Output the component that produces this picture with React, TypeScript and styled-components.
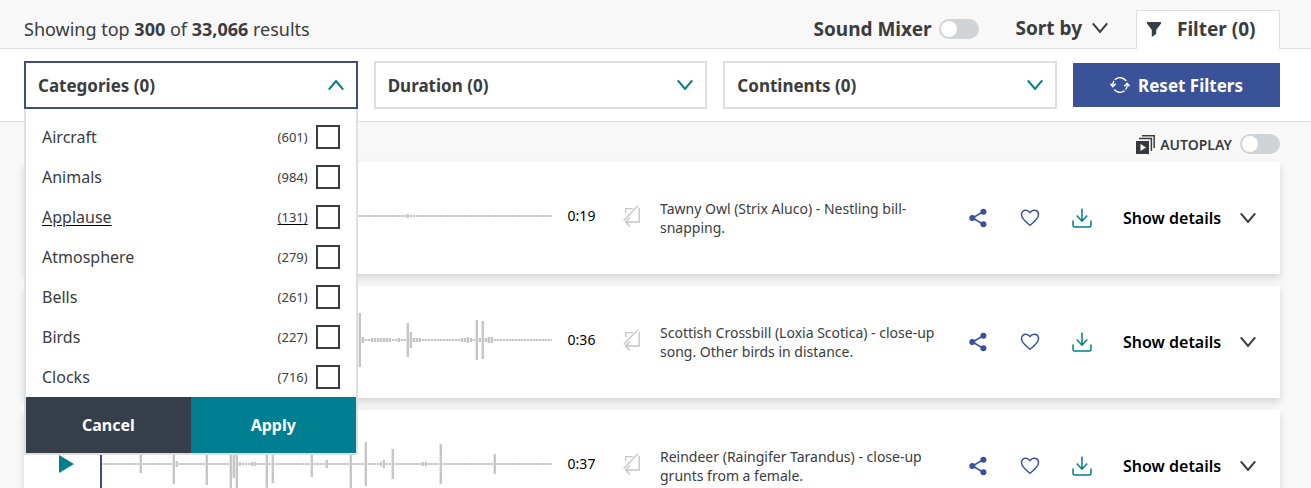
import React, { useState } from "react";
import styled, { createGlobalStyle, css } from "styled-components";

const ink = "#3a3c3e";
const line = "#dedfe0";
const teal = "#007f88";
const navy = "#3a5398";

const GlobalStyle = createGlobalStyle`
  * { box-sizing: border-box; }
  body {
    margin: 0;
    background: #f8f8f8;
    color: ${ink};
    font-family: "Noto Sans", "Open Sans", sans-serif;
  }
  button {
    margin: 0;
    padding: 0;
    border: 0;
    background: none;
    color: inherit;
    font: inherit;
    cursor: pointer;
  }
  svg { display: block; flex: none; }
`;

const Page = styled.div`
  height: 100vh;
  overflow: hidden;
`;

const TopBar = styled.header`
  display: flex;
  align-items: flex-end;
  height: 49px;
  padding: 0 31px 0 24px;
  border-bottom: 1px solid ${line};
`;

const BarItem = styled.div`
  display: flex;
  align-items: center;
  height: 38px;
`;

const ResultCount = styled(BarItem)`
  flex: 1;
  font-size: 18px;
  line-height: 24px;
`;

const MixerLabel = styled.label`
  display: flex;
  align-items: center;
  gap: 8px;
  height: 38px;
  margin-right: 36px;
  font-size: 19px;
  font-weight: 700;
`;

const SortButton = styled.button`
  display: flex;
  align-items: center;
  gap: 10px;
  height: 40px;
  margin-right: 28px;
  font-size: 19px;
  font-weight: 700;
`;

const FilterTab = styled.button`
  display: flex;
  align-items: center;
  gap: 16px;
  width: 144px;
  height: 39px;
  margin-bottom: -1px;
  padding: 0 0 2px 10px;
  border: 1px solid ${line};
  border-bottom: 0;
  background: #fff;
  font-size: 19px;
  font-weight: 700;
`;

const Toggle = styled.input`
  appearance: none;
  flex: none;
  display: flex;
  align-items: center;
  width: 40px;
  height: 20px;
  margin: 0;
  padding: 0 2px;
  border-radius: 10px;
  background: #d1d4d7;
  cursor: pointer;

  &::before {
    content: "";
    width: 16px;
    height: 16px;
    border-radius: 50%;
    background: #fff;
  }

  &:checked {
    justify-content: flex-end;
    background: ${teal};
  }
`;

const FilterBar = styled.section`
  display: flex;
  align-items: center;
  gap: 16px;
  height: 73px;
  padding: 0 31px 0 24px;
  border-bottom: 1px solid ${line};
  background: #fff;
`;

const Dropdown = styled.div`
  position: relative;
  flex: 1;
`;

const DropdownButton = styled.button<{ $open?: boolean }>`
  display: flex;
  align-items: center;
  justify-content: space-between;
  width: 100%;
  height: 48px;
  padding: 0 12px;
  border: 2px solid ${(p) => (p.$open ? "#404f78" : line)};
  background: #fff;
  color: ${ink};
  font-size: 17px;
  font-weight: 700;
`;

const ResetButton = styled.button`
  display: flex;
  align-items: center;
  justify-content: center;
  gap: 8px;
  width: 207px;
  height: 44px;
  background: ${navy};
  color: #fff;
  font-size: 17px;
  font-weight: 700;
`;

const Panel = styled.div`
  position: absolute;
  z-index: 2;
  top: 100%;
  left: 0;
  right: 0;
  border: 2px solid ${line};
  border-top: 0;
  background: #fff;
`;

const OptionList = styled.ul`
  margin: 0;
  padding: 8px 16px 0;
  list-style: none;
`;

const Option = styled.label<{ $hovered?: boolean }>`
  display: flex;
  align-items: center;
  gap: 8px;
  height: 40px;
  font-size: 16px;
  ${(p) =>
    p.$hovered &&
    css`
      text-decoration: underline #000;
      text-underline-offset: 2px;
    `}
`;

const OptionName = styled.span`
  flex: 1;
`;

const OptionCount = styled.span`
  font-size: 13px;
`;

const Tick = styled.input`
  appearance: none;
  width: 24px;
  height: 24px;
  margin: 0;
  border: 2px solid ${ink};
  background: #fff;

  &:checked {
    background: ${teal};
  }
`;

const PanelActions = styled.div`
  display: flex;
`;

const PanelButton = styled.button<{ $primary?: boolean }>`
  flex: 1;
  height: 56px;
  background: ${(p) => (p.$primary ? "#007f92" : "#353e49")};
  color: #fff;
  font-size: 16px;
  font-weight: 700;
`;

const Results = styled.main`
  padding: 0 31px 0 24px;
`;

const AutoplayRow = styled.div`
  display: flex;
  align-items: center;
  justify-content: flex-end;
  height: 40px;
  padding-top: 4px;
`;

const AutoplayLabel = styled.label`
  display: flex;
  align-items: center;
  gap: 8px;
  font-size: 14px;
  font-weight: 600;
`;

const AutoplayText = styled.span`
  display: flex;
  align-items: center;
  gap: 5px;
`;

const CardList = styled.div`
  display: grid;
  gap: 12px;
`;

const Card = styled.article`
  display: grid;
  grid-template-columns:
    76px minmax(0, 452fr) 59px 41px minmax(0, 300fr)
    52px 52px 52px 172px;
  align-items: center;
  height: 112px;
  padding-bottom: 4px;
  background: #fff;
  box-shadow: 0 4px 8px rgba(0, 0, 0, 0.14);
`;

const IconButton = styled.button`
  display: grid;
  place-items: center;
  height: 44px;
`;

const ActionButton = styled(IconButton)`
  padding-top: 4px;
`;

const PlayButton = styled(IconButton)`
  padding-left: 10px;
`;

const WaveSvg = styled.svg`
  width: 100%;
  height: 56px;
`;

const Time = styled.span`
  padding-bottom: 2px;
  text-align: center;
  color: #000;
  font-size: 14px;
`;

const Description = styled.p`
  margin: 0;
  padding: 4px 8px 0;
  font-size: 14px;
  line-height: 19px;
`;

const DetailsButton = styled.button`
  display: flex;
  align-items: center;
  justify-content: space-between;
  height: 44px;
  padding: 4px 24px 0 15px;
  color: #000;
  font-size: 16px;
  font-weight: 600;
`;

function Chevron({ up = false, color = ink }: { up?: boolean; color?: string }) {
  return (
    <svg width="16" height="12" viewBox="0 0 16 12" fill="none" stroke={color} strokeWidth="2" aria-hidden="true">
      <path d={up ? "M.8 10.6 8 2 15.2 10.6" : "M.8 1.4 8 10 15.2 1.4"} />
    </svg>
  );
}

function FunnelIcon() {
  return (
    <svg width="14" height="15" viewBox="0 0 14 15" fill="#353e49" aria-hidden="true">
      <path d="M0 0H14V1.6L9.2 8V12L4.8 15V8L0 1.6Z" />
    </svg>
  );
}

function ResetIcon() {
  return (
    <svg width="20" height="18" viewBox="0 0 20 18" fill="none" stroke="#fff" strokeWidth="1.4" aria-hidden="true">
      <path d="M4.8 3.8A7.3 7.3 0 0 1 16.2 5.2M17.2 8.2A7.3 7.3 0 0 1 15.6 13.6M14.6 14.8A7.3 7.3 0 0 1 4.2 13.4M2.8 9.8A7.3 7.3 0 0 1 4 4.9" />
      <path d="M14.2 10.2 17.2 7.2 19.6 10.4M.4 7.6 2.8 10.6 5.8 7.8" />
    </svg>
  );
}

function AutoplayIcon() {
  return (
    <svg width="19" height="19" viewBox="0 0 19 19" fill="none" aria-hidden="true">
      <path d="M6 .8H18.2V13M3 3.6H15.4V16" stroke={ink} strokeWidth="1.5" />
      <path d="M0 6H13V19H0Z" fill="#353a40" />
      <path d="M4.5 9 10 12.5 4.5 16Z" fill="#fff" />
    </svg>
  );
}

function LoopOffIcon() {
  return (
    <svg width="18" height="22" viewBox="0 0 18 22" fill="none" stroke="#c6c6c6" strokeWidth="1.4" aria-hidden="true">
      <path d="M2.6 8V3.6H10M16.2 3V17H3M7 12.6 2.6 17 7 21.4M.6 15.6 15 .8" />
    </svg>
  );
}

function ShareIcon() {
  return (
    <svg width="18" height="20" viewBox="0 0 18 20" fill={navy} stroke={navy} strokeWidth="1.5" aria-hidden="true">
      <path d="M14.5 3.5 3.5 10 14.5 16.5" fill="none" />
      <circle cx="14.4" cy="3.7" r="2.3" />
      <circle cx="3.3" cy="10" r="2.3" />
      <circle cx="14.4" cy="16.3" r="2.3" />
    </svg>
  );
}

function HeartIcon() {
  return (
    <svg width="20" height="18" viewBox="0 0 20 18" fill="none" stroke={navy} strokeWidth="1.5" aria-hidden="true">
      <path d="M10 3.6C8.8 1.8 7.4 1.2 5.8 1.2 3.2 1.2 1.5 3.1 1.5 5.6 1.5 10 6 13.2 10 16.3 14 13.2 18.5 10 18.5 5.6 18.5 3.1 16.8 1.2 14.2 1.2 12.6 1.2 11.2 1.8 10 3.6Z" />
    </svg>
  );
}

function DownloadIcon() {
  return (
    <svg width="20" height="20" viewBox="0 0 20 20" fill="none" stroke={teal} strokeWidth="1.5" aria-hidden="true">
      <path d="M10 .5V13M4.8 7.6 10 13.2 15.2 7.6M1 12.5V17.4Q1 18.9 2.5 18.9H17.5Q19 18.9 19 17.4V12.5" />
    </svg>
  );
}

const BAR_COUNT = 151;

/* Peaks map a bar index to its half height; every other bar is silence. */
function Waveform({ peaks }: { peaks: Record<number, number> }) {
  return (
    <WaveSvg viewBox="0 0 452 56" preserveAspectRatio="none" role="img" aria-label="Waveform">
      <g fill="#c6c6c6">
        {Array.from({ length: BAR_COUNT }, (_, i) => {
          const half = peaks[i] ?? 1;
          return <rect key={i} x={0.6 + i * 3} y={28 - half} width="2.4" height={half * 2} />;
        })}
      </g>
      <rect x="0" y="0" width="2" height="56" fill="#3f4a86" />
    </WaveSvg>
  );
}

const categories = [
  { name: "Aircraft", count: 601 },
  { name: "Animals", count: 984 },
  { name: "Applause", count: 131, hovered: true },
  { name: "Atmosphere", count: 279 },
  { name: "Bells", count: 261 },
  { name: "Birds", count: 227 },
  { name: "Clocks", count: 716 },
];

const sounds: { title: string; time: string; peaks: Record<number, number> }[] = [
  {
    title: "Tawny Owl (Strix Aluco) - Nestling bill-snapping.",
    time: "0:19",
    peaks: { 102: 2 },
  },
  {
    title: "Scottish Crossbill (Loxia Scotica) - close-up song. Other birds in distance.",
    time: "0:36",
    peaks: {
      86: 27, 87: 3, 90: 2, 91: 2, 92: 2, 93: 2, 94: 2, 95: 2, 96: 2, 99: 2,
      102: 17, 103: 8, 104: 2, 105: 2, 106: 2, 120: 2, 121: 2, 122: 3, 123: 2,
      125: 20, 126: 2, 127: 19, 128: 2, 129: 3, 130: 3,
    },
  },
  {
    title: "Reindeer (Raingifer Tarandus) - close-up grunts from a female.",
    time: "0:37",
    peaks: {
      13: 9, 24: 20, 25: 3, 35: 21, 43: 26, 44: 14, 45: 26, 46: 2, 50: 2, 51: 2,
      55: 26, 57: 19, 70: 13, 75: 4, 83: 26, 88: 22, 93: 2, 94: 4, 97: 15,
      107: 2, 108: 2, 113: 20, 131: 10,
    },
  },
];

export default function App() {
  const [open, setOpen] = useState(true);

  return (
    <Page>
      <GlobalStyle />
      <TopBar>
        <ResultCount>
          <span>
            Showing top <strong>300</strong> of <strong>33,066</strong> results
          </span>
        </ResultCount>
        <MixerLabel>
          Sound Mixer
          <Toggle type="checkbox" role="switch" />
        </MixerLabel>
        <SortButton type="button">
          Sort by
          <Chevron />
        </SortButton>
        <FilterTab type="button" aria-expanded="true">
          <FunnelIcon />
          Filter (0)
        </FilterTab>
      </TopBar>

      <FilterBar>
        <Dropdown>
          <DropdownButton type="button" $open={open} aria-expanded={open} onClick={() => setOpen(!open)}>
            Categories (0)
            <Chevron up={open} color={teal} />
          </DropdownButton>
          {open && (
            <Panel>
              <OptionList>
                {categories.map((c) => (
                  <li key={c.name}>
                    <Option $hovered={c.hovered}>
                      <OptionName>{c.name}</OptionName>
                      <OptionCount>({c.count})</OptionCount>
                      <Tick type="checkbox" />
                    </Option>
                  </li>
                ))}
              </OptionList>
              <PanelActions>
                <PanelButton type="button" onClick={() => setOpen(false)}>Cancel</PanelButton>
                <PanelButton type="button" $primary onClick={() => setOpen(false)}>Apply</PanelButton>
              </PanelActions>
            </Panel>
          )}
        </Dropdown>
        <Dropdown>
          <DropdownButton type="button" aria-expanded="false">
            Duration (0)
            <Chevron color={teal} />
          </DropdownButton>
        </Dropdown>
        <Dropdown>
          <DropdownButton type="button" aria-expanded="false">
            Continents (0)
            <Chevron color={teal} />
          </DropdownButton>
        </Dropdown>
        <ResetButton type="button">
          <ResetIcon />
          Reset Filters
        </ResetButton>
      </FilterBar>

      <Results>
        <AutoplayRow>
          <AutoplayLabel>
            <AutoplayText>
              <AutoplayIcon />
              AUTOPLAY
            </AutoplayText>
            <Toggle type="checkbox" role="switch" />
          </AutoplayLabel>
        </AutoplayRow>
        <CardList>
          {sounds.map((s) => (
            <Card key={s.time}>
              <PlayButton type="button" aria-label="Play">
                <svg width="16" height="18" viewBox="0 0 16 18" fill={teal} aria-hidden="true">
                  <path d="M0 0 15 9 0 18Z" />
                </svg>
              </PlayButton>
              <Waveform peaks={s.peaks} />
              <Time>{s.time}</Time>
              <IconButton type="button" aria-label="Loop">
                <LoopOffIcon />
              </IconButton>
              <Description>{s.title}</Description>
              <ActionButton type="button" aria-label="Share">
                <ShareIcon />
              </ActionButton>
              <ActionButton type="button" aria-label="Favourite">
                <HeartIcon />
              </ActionButton>
              <ActionButton type="button" aria-label="Download">
                <DownloadIcon />
              </ActionButton>
              <DetailsButton type="button">
                Show details
                <Chevron />
              </DetailsButton>
            </Card>
          ))}
        </CardList>
      </Results>
    </Page>
  );
}
